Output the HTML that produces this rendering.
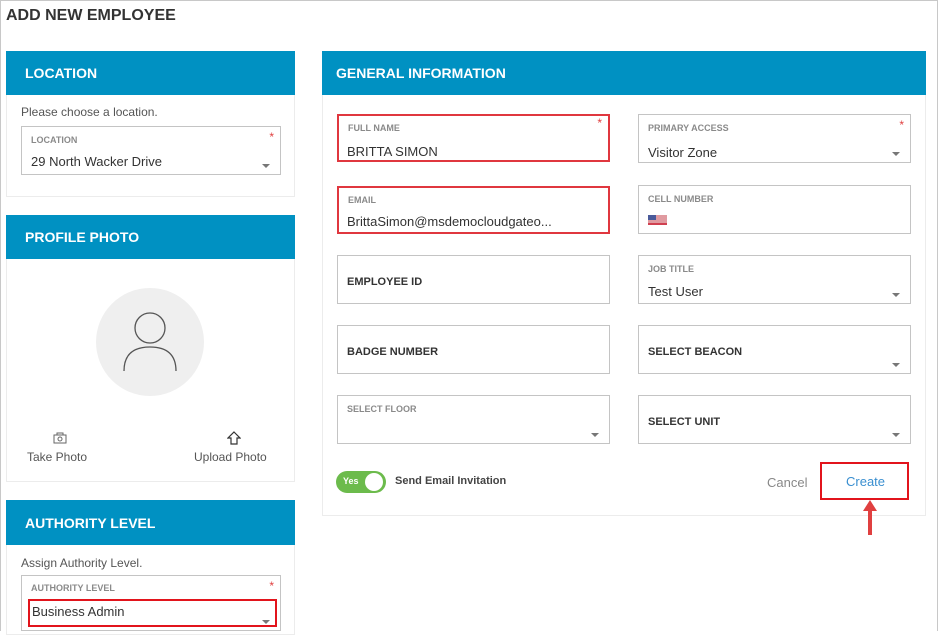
<!DOCTYPE html>
<html><head><style>
*{box-sizing:border-box;margin:0;padding:0}
body{width:938px;height:631px;background:#fff;font-family:"Liberation Sans",sans-serif;position:relative;overflow:hidden;color:#333}
.a{position:absolute}
.frame{left:0;top:0;width:938px;height:631px;border:1px solid #c8c8c8;border-bottom:none}
.hdr{background:#0091c2;color:#fff;font-weight:bold;font-size:14px;padding-left:19px;display:flex;align-items:center}
.panel{border:1px solid #ececec;border-top:none}
.fld{border:1px solid #c4c4c4;background:#fff}
.lbl{position:absolute;left:9px;font-size:9px;font-weight:bold;color:#8a8a8a}
.big{position:absolute;left:9px;font-size:11px;font-weight:bold;color:#333;top:20px}
.val{position:absolute;left:9px;font-size:13px;color:#333}
.arr{position:absolute;right:10px;bottom:6px;width:0;height:0;border-left:4px solid transparent;border-right:4px solid transparent;border-top:4px solid #777}
.star{position:absolute;right:6px;top:3px;color:#e04040;font-size:12px}
.red{border:2px solid #e0373f}
</style></head><body>
<div class="a frame"></div>
<div class="a" style="left:6px;top:7px;font-size:16px;font-weight:bold;color:#333">ADD NEW EMPLOYEE</div>

<div class="a hdr" style="left:6px;top:51px;width:289px;height:44px;padding-left:19px">LOCATION</div>
<div class="a panel" style="left:6px;top:95px;width:289px;height:102px"></div>
<div class="a" style="left:21px;top:105px;font-size:12px;color:#555">Please choose a location.</div>
<div class="a fld" style="left:21px;top:126px;width:260px;height:49px"><div class="lbl" style="top:8px">LOCATION</div><div class="star">*</div><div class="val" style="top:27px">29 North Wacker Drive</div><div class="arr"></div></div>

<div class="a hdr" style="left:6px;top:215px;width:289px;height:44px">PROFILE PHOTO</div>
<div class="a panel" style="left:6px;top:259px;width:289px;height:223px"></div>
<div class="a" style="left:96px;top:288px;width:108px;height:108px;border-radius:50%;background:#efefef"></div>
<svg class="a" style="left:122px;top:310px" width="56" height="62" viewBox="0 0 56 62"><circle cx="28" cy="18" r="15" fill="none" stroke="#555" stroke-width="1.3"/><path d="M2 61 C2 44 12 37 28 37 C44 37 54 44 54 61" fill="none" stroke="#555" stroke-width="1.3"/></svg>
<svg class="a" style="left:53px;top:432px" width="14" height="12" viewBox="0 0 14 12"><rect x="1" y="3" width="12" height="8" fill="none" stroke="#666"/><rect x="4" y="1" width="6" height="2" fill="none" stroke="#666"/><circle cx="7" cy="7" r="2" fill="none" stroke="#666"/></svg>
<div class="a" style="left:27px;top:450px;font-size:12px;color:#555">Take Photo</div>
<svg class="a" style="left:227px;top:431px" width="14" height="14" viewBox="0 0 14 14"><path d="M7 1 L13 7 L10 7 L10 13 L4 13 L4 7 L1 7 Z" fill="none" stroke="#333" stroke-width="1.2"/></svg>
<div class="a" style="left:194px;top:450px;font-size:12px;color:#555">Upload Photo</div>

<div class="a hdr" style="left:6px;top:500px;width:289px;height:45px">AUTHORITY LEVEL</div>
<div class="a panel" style="left:6px;top:545px;width:289px;height:90px"></div>
<div class="a" style="left:21px;top:556px;font-size:12px;color:#555">Assign Authority Level.</div>
<div class="a fld" style="left:21px;top:575px;width:260px;height:56px"><div class="lbl" style="top:7px">AUTHORITY LEVEL</div><div class="star">*</div><div class="arr"></div></div>
<div class="a red" style="left:28px;top:599px;width:249px;height:28px;border-color:#e2141c"></div>
<div class="a" style="left:32px;top:604px;font-size:13px;color:#333">Business Admin</div>

<div class="a hdr" style="left:322px;top:51px;width:604px;height:44px;padding-left:14px">GENERAL INFORMATION</div>
<div class="a panel" style="left:322px;top:95px;width:604px;height:421px"></div>

<div class="a fld red" style="left:337px;top:114px;width:273px;height:48px"><div class="lbl" style="top:7px">FULL NAME</div><div class="star" style="top:0">*</div><div class="val" style="top:28px;left:8px">BRITTA SIMON</div></div>
<div class="a fld" style="left:638px;top:114px;width:273px;height:49px"><div class="lbl" style="top:8px">PRIMARY ACCESS</div><div class="star">*</div><div class="val" style="top:30px">Visitor Zone</div><div class="arr"></div></div>

<div class="a fld red" style="left:337px;top:186px;width:273px;height:48px"><div class="lbl" style="top:7px">EMAIL</div><div class="val" style="top:26px;left:8px">BrittaSimon@msdemocloudgateo...</div></div>
<div class="a fld" style="left:638px;top:185px;width:273px;height:49px"><div class="lbl" style="top:8px">CELL NUMBER</div>
<svg class="a" style="left:9px;top:29px" width="19" height="10"><rect width="19" height="10" fill="#e09aa0"/><rect y="8" width="19" height="2" fill="#d04050"/><rect width="8" height="5" fill="#4a5a9a"/></svg></div>

<div class="a fld" style="left:337px;top:255px;width:273px;height:49px"><div class="big">EMPLOYEE ID</div></div>
<div class="a fld" style="left:638px;top:255px;width:273px;height:49px"><div class="lbl" style="top:8px">JOB TITLE</div><div class="val" style="top:28px">Test User</div><div class="arr"></div></div>

<div class="a fld" style="left:337px;top:325px;width:273px;height:49px"><div class="big">BADGE NUMBER</div></div>
<div class="a fld" style="left:638px;top:325px;width:273px;height:49px"><div class="big">SELECT BEACON</div><div class="arr"></div></div>

<div class="a fld" style="left:337px;top:395px;width:273px;height:49px"><div class="lbl" style="top:8px">SELECT FLOOR</div><div class="arr"></div></div>
<div class="a fld" style="left:638px;top:395px;width:273px;height:49px"><div class="big">SELECT UNIT</div><div class="arr"></div></div>

<div class="a" style="left:336px;top:471px;width:50px;height:22px;border-radius:11px;background:#6cbb4c"></div>
<div class="a" style="left:343px;top:476px;font-size:9px;font-weight:bold;color:#fff">Yes</div>
<div class="a" style="left:365px;top:473px;width:18px;height:18px;border-radius:50%;background:#fff"></div>
<div class="a" style="left:395px;top:475px;font-size:11px;font-weight:bold;color:#444">Send Email Invitation</div>
<div class="a" style="left:767px;top:475px;font-size:13px;color:#888">Cancel</div>
<div class="a" style="left:820px;top:462px;width:89px;height:38px;border:2px solid #e2141c"></div>
<div class="a" style="left:846px;top:474px;font-size:13px;color:#3a8fd0">Create</div>
<div class="a" style="left:868px;top:508px;width:4px;height:27px;background:#e04040"></div>
<div class="a" style="left:863px;top:500px;width:0;height:0;border-left:7px solid transparent;border-right:7px solid transparent;border-bottom:11px solid #e04040"></div>
</body></html>
